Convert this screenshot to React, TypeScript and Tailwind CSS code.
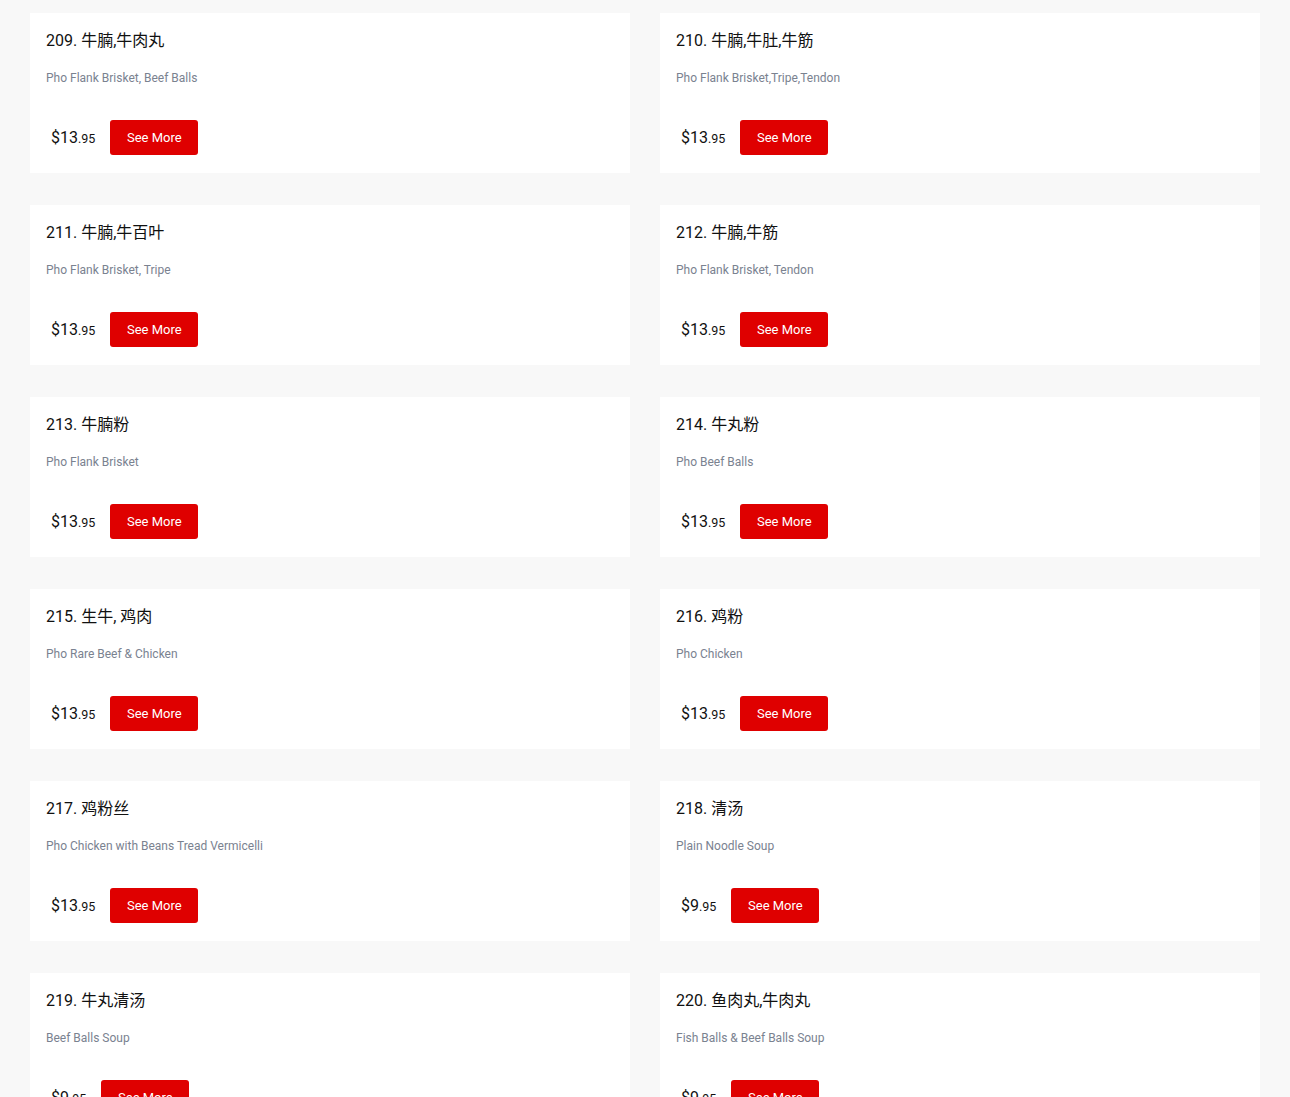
const items = [
  { no: 209, zh: '牛腩,牛肉丸', en: 'Pho Flank Brisket, Beef Balls', dollars: '13', cents: '95' },
  { no: 210, zh: '牛腩,牛肚,牛筋', en: 'Pho Flank Brisket,Tripe,Tendon', dollars: '13', cents: '95' },
  { no: 211, zh: '牛腩,牛百叶', en: 'Pho Flank Brisket, Tripe', dollars: '13', cents: '95' },
  { no: 212, zh: '牛腩,牛筋', en: 'Pho Flank Brisket, Tendon', dollars: '13', cents: '95' },
  { no: 213, zh: '牛腩粉', en: 'Pho Flank Brisket', dollars: '13', cents: '95' },
  { no: 214, zh: '牛丸粉', en: 'Pho Beef Balls', dollars: '13', cents: '95' },
  { no: 215, zh: '生牛, 鸡肉', en: 'Pho Rare Beef & Chicken', dollars: '13', cents: '95' },
  { no: 216, zh: '鸡粉', en: 'Pho Chicken', dollars: '13', cents: '95' },
  { no: 217, zh: '鸡粉丝', en: 'Pho Chicken with Beans Tread Vermicelli', dollars: '13', cents: '95' },
  { no: 218, zh: '清汤', en: 'Plain Noodle Soup', dollars: '9', cents: '95' },
  { no: 219, zh: '牛丸清汤', en: 'Beef Balls Soup', dollars: '9', cents: '95' },
  { no: 220, zh: '鱼肉丸,牛肉丸', en: 'Fish Balls & Beef Balls Soup', dollars: '9', cents: '95' },
];

function MenuCard({ item }: { item: (typeof items)[number] }) {
  return (
    <div className="bg-white h-[160px] px-4 pt-4 flex flex-col">
      <h3 className="text-[16px] leading-6 text-[#111]">
        {item.no}. {item.zh}
      </h3>
      <p className="mt-4 text-[12px] leading-[18px] text-[#7a8290]">{item.en}</p>
      <div className="mt-[33px] flex items-center">
        <span className="ml-[5px] text-[#111]">
          <span className="text-[16px]">${item.dollars}</span>
          <span className="text-[12.5px]">.{item.cents}</span>
        </span>
        <button className="ml-[15px] h-[35px] w-[88px] rounded-[3px] bg-[#df0000] text-[13px] text-white">
          See More
        </button>
      </div>
    </div>
  );
}

export default function App() {
  return (
    <div
      className="min-h-screen bg-[#f8f8f8] px-[30px] pt-[13px] pb-8"
      style={{ fontFamily: 'Roboto, "Noto Sans CJK SC", sans-serif' }}
    >
      <div className="grid grid-cols-2 gap-x-[30px] gap-y-[32px]">
        {items.map((item) => (
          <MenuCard key={item.no} item={item} />
        ))}
      </div>
    </div>
  );
}
